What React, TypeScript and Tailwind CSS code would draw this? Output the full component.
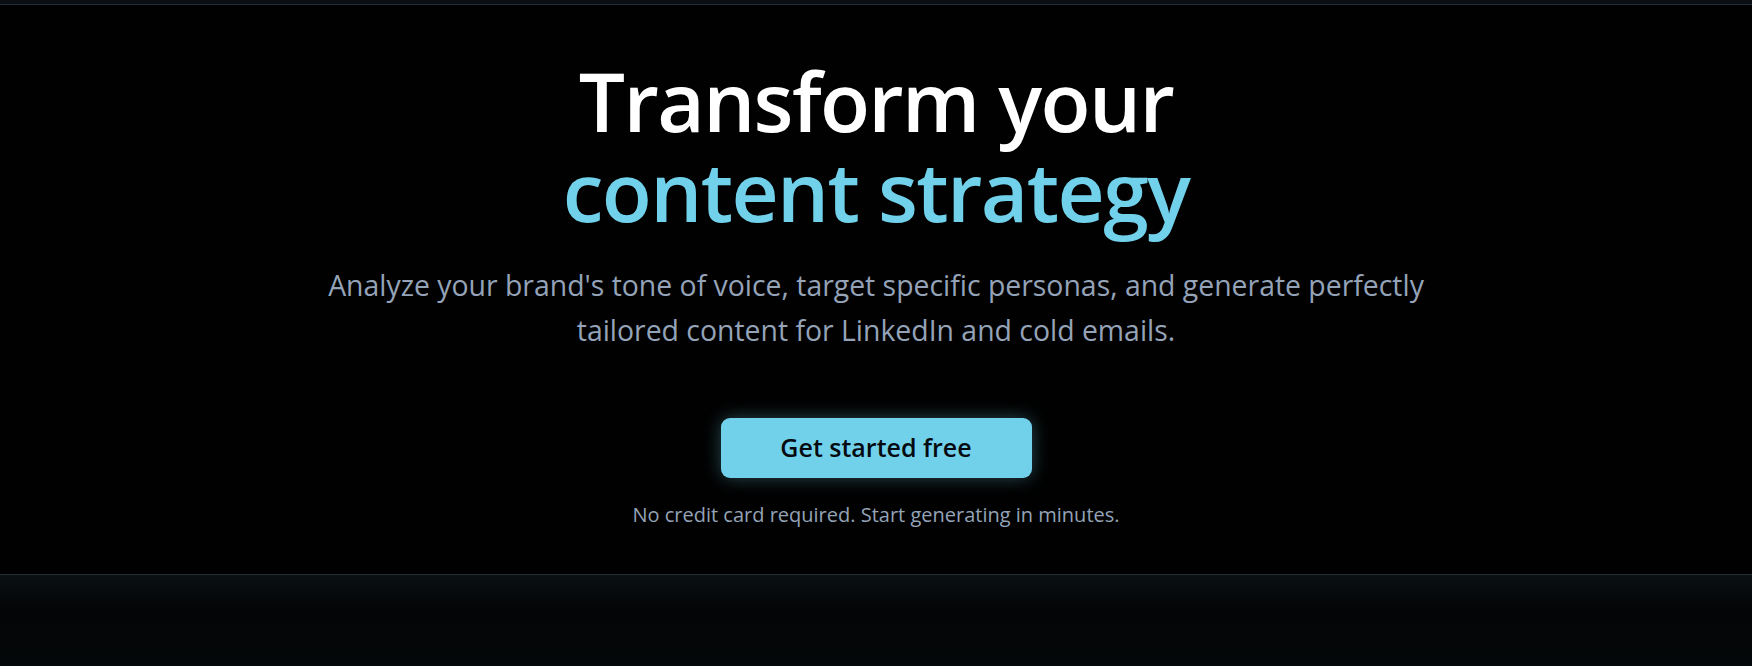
export default function App() {
  return (
    <div
      className="min-h-[666px] bg-[#010101] flex flex-col"
      style={{ fontFamily: '"Open Sans", "Noto Sans", sans-serif' }}
    >
      {/* top strip (end of previous section) */}
      <div className="h-[5px] bg-[#0a0f14] border-b border-[#232b36]" />

      {/* Hero */}
      <section className="flex flex-col items-center pt-[50px] pb-[44px] border-b border-[#262b31] text-center">
        <h1 className="font-semibold text-[82px] leading-[90px] tracking-[-0.02em]">
          <span className="block text-white">Transform your</span>
          <span className="block text-[#72d1ea]">content strategy</span>
        </h1>

        <p className="mt-[28px] max-w-[1140px] text-[28.4px] leading-[45px] text-[#94a3b8]">
          Analyze your brand's tone of voice, target specific personas, and generate perfectly
          tailored content for LinkedIn and cold emails.
        </p>

        <button className="mt-[65px] w-[311px] h-[60px] rounded-[9px] bg-[#72d1ea] text-[#050a10] text-[25px] font-semibold shadow-[0_0_18px_rgba(114,209,234,0.35)]">
          Get started free
        </button>

        <p className="mt-[22px] text-[20px] leading-[30px] text-[#94a3b8]">
          No credit card required. Start generating in minutes.
        </p>
      </section>

      {/* next section */}
      <div className="flex-1 min-h-[90px] bg-[linear-gradient(to_bottom,#0b1013,#030405_36px,#05080a)]" />
    </div>
  );
}
